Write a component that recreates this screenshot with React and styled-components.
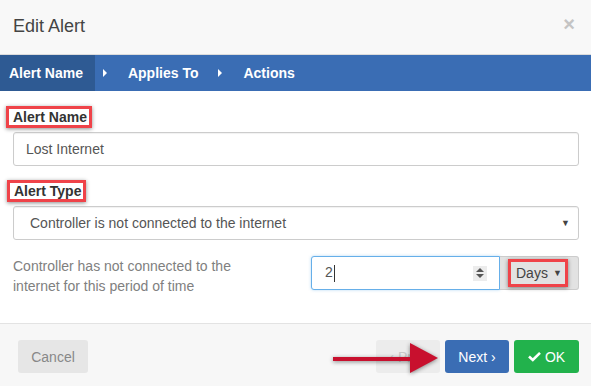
import React from 'react';
import styled, {createGlobalStyle} from 'styled-components';

const GlobalStyle = createGlobalStyle`
  html, body {
    margin: 0;
    padding: 0;
    background: #ffffff;
    font-family: "Liberation Sans", Arial, sans-serif;
  }
  * {
    box-sizing: border-box;
  }
`

const ModalSC = styled('div')`
  width: 591px;
  height: 386px;
  overflow: hidden;
  background: #ffffff;
  display: flex;
  flex-direction: column;
`

const HeaderSC = styled('div')`
  height: 55px;
  flex-shrink: 0;
  background: #f8f8f8;
  border-bottom: 1px solid #dcdcdc;
  display: flex;
  align-items: center;
  justify-content: space-between;
  padding: 0 16px 2px 13px;
`

const TitleSC = styled('h4')`
  margin: 0;
  font-size: 18px;
  font-weight: normal;
  color: #444444;
`

const CloseSC = styled('span')`
  font-size: 20px;
  font-weight: bold;
  color: #c4c4c4;
  line-height: 1;
  margin-bottom: 4px;
`

const StepBarSC = styled('div')`
  height: 36px;
  flex-shrink: 0;
  background: #3a6db4;
  display: flex;
  align-items: stretch;
`

const StepSC = styled('div')`
  display: flex;
  align-items: center;
  padding: 0 12px 0 9px;
  color: #ffffff;
  font-size: 14px;
  font-weight: bold;
  background: ${p => p.active ? '#2e5a93' : 'transparent'};
`

const StepArrowSC = styled('span')`
  align-self: center;
  width: 0;
  height: 0;
  border-top: 4px solid transparent;
  border-bottom: 4px solid transparent;
  border-left: 4px solid #ffffff;
  margin: 0 12px 0 8px;
`

const BodySC = styled('div')`
  flex: 1;
  padding: 15px 12px 0 13px;
`

const GroupSC = styled('div')`
  margin-bottom: ${p => p.gap || 15}px;
`

const LabelSC = styled('label')`
  display: block;
  margin-bottom: 4px;
  height: 22px;
`

const HighlightSC = styled('span')`
  display: inline-block;
  border: 3px solid #ef4349;
  box-shadow: 0 1px 4px rgba(0, 0, 0, 0.45);
  padding: 0 2px 0 4px;
  line-height: 16px;
  font-size: 14px;
  font-weight: bold;
  color: #333333;
  margin-left: ${p => p.shift || 0}px;
`

const FieldSC = styled('div')`
  height: 34px;
  border: 1px solid ${p => p.focus ? '#66afe9' : '#cccccc'};
  border-radius: ${p => p.square ? '3px 0 0 3px' : '3px'};
  background: #ffffff;
  display: flex;
  align-items: center;
  padding: 0 ${p => p.padRight || 12}px 0 ${p => p.padLeft || 12}px;
  font-size: 14px;
  color: #555555;
  box-shadow: ${p => p.focus ? '0 0 3px rgba(102, 175, 233, 0.5)' : 'inset 0 1px 1px rgba(0,0,0,0.06)'};
`

const GrowSC = styled('span')`
  flex: 1;
`

const CaretSC = styled('span')`
  display: inline-block;
  width: 1px;
  height: 17px;
  background: #333333;
  margin-left: 1px;
  vertical-align: middle;
`

const SelectArrowSC = styled('span')`
  font-size: 9px;
  color: #444444;
`

const SpinSC = styled('span')`
  width: 14px;
  height: 15px;
  background: #ececec;
  display: flex;
  flex-direction: column;
  align-items: center;
  justify-content: center;
  gap: 2px;
`

const SpinTriSC = styled('span')`
  width: 0;
  height: 0;
  border-left: 4px solid transparent;
  border-right: 4px solid transparent;
  ${p => p.up ? 'border-bottom: 4px solid #555555;' : 'border-top: 4px solid #555555;'}
`

const RowSC = styled('div')`
  display: grid;
  grid-template-columns: 283px 1fr;
  column-gap: 15px;
`

const HelpSC = styled('div')`
  max-width: 240px;
  font-size: 14px;
  line-height: 20px;
  color: #808080;
`

const InputGroupSC = styled('div')`
  display: flex;
`

const AddonSC = styled('div')`
  width: 79px;
  height: 34px;
  background: #e2e2e2;
  border: 1px solid #cccccc;
  border-left: none;
  border-radius: 0 3px 3px 0;
  display: flex;
  align-items: center;
  padding-left: 8px;
`

const DaysSC = styled('span')`
  display: inline-flex;
  align-items: center;
  gap: 5px;
  height: 28px;
  border: 3px solid #ef4349;
  box-shadow: 0 1px 4px rgba(0, 0, 0, 0.45);
  padding: 0 3px 0 5px;
  font-size: 14px;
  color: #444444;
`

const FooterSC = styled('div')`
  position: relative;
  height: 63px;
  flex-shrink: 0;
  background: #f7f7f7;
  border-top: 1px solid #e3e3e3;
  display: flex;
  align-items: flex-start;
  justify-content: space-between;
  padding: 16px 12px 0 18px;
`

const ButtonsSC = styled('div')`
  display: flex;
  gap: 5px;
`

const ButtonSC = styled('button')`
  height: 33px;
  min-width: ${p => p.w || 64}px;
  border: none;
  border-radius: 3px;
  font-family: inherit;
  font-size: 14px;
  padding: 0 10px;
  display: flex;
  align-items: center;
  justify-content: center;
  gap: 4px;
  background: ${p => p.bg};
  color: ${p => p.color};
`

const PointerSC = styled('svg')`
  position: absolute;
  left: 330px;
  top: 18px;
  filter: drop-shadow(0 1px 2px rgba(0, 0, 0, 0.45));
`

const App = () => {
    const steps = ['Alert Name', 'Applies To', 'Actions']

    return (
        <>
            <GlobalStyle/>
            <ModalSC>
                <HeaderSC>
                    <TitleSC>Edit Alert</TitleSC>
                    <CloseSC>×</CloseSC>
                </HeaderSC>

                <StepBarSC>
                    {
                        steps.map((step, index) => (
                            <React.Fragment key={step}>
                                {index > 0 && <StepArrowSC/>}
                                <StepSC active={index === 0}>{step}</StepSC>
                            </React.Fragment>
                        ))
                    }
                </StepBarSC>

                <BodySC>
                    <GroupSC gap={14}>
                        <LabelSC><HighlightSC shift={-7}>Alert Name</HighlightSC></LabelSC>
                        <FieldSC padLeft={12}>Lost Internet</FieldSC>
                    </GroupSC>

                    <GroupSC gap={16}>
                        <LabelSC><HighlightSC shift={-6}>Alert Type</HighlightSC></LabelSC>
                        <FieldSC padLeft={16} padRight={8}>
                            <GrowSC>Controller is not connected to the internet</GrowSC>
                            <SelectArrowSC>▼</SelectArrowSC>
                        </FieldSC>
                    </GroupSC>

                    <RowSC>
                        <HelpSC>Controller has not connected to the internet for this period of time</HelpSC>
                        <InputGroupSC>
                            <FieldSC focus square padLeft={13} padRight={12} style={{flex: 1}}>
                                <GrowSC>2<CaretSC/></GrowSC>
                                <SpinSC>
                                    <SpinTriSC up/>
                                    <SpinTriSC/>
                                </SpinSC>
                            </FieldSC>
                            <AddonSC>
                                <DaysSC>Days <SelectArrowSC>▼</SelectArrowSC></DaysSC>
                            </AddonSC>
                        </InputGroupSC>
                    </RowSC>
                </BodySC>

                <FooterSC>
                    <ButtonSC w={70} bg="#e6e6e6" color="#888888">Cancel</ButtonSC>
                    <ButtonsSC>
                        <ButtonSC bg="#ececec" color="#c8c8c8">‹ Prev</ButtonSC>
                        <ButtonSC bg="#3a6db4" color="#ffffff">Next ›</ButtonSC>
                        <ButtonSC w={65} bg="#22b24c" color="#ffffff">
                            <svg width="13" height="11" viewBox="0 0 13 11">
                                <path d="M1 5.5 L4.8 9 L12 1.8" fill="none" stroke="#ffffff" strokeWidth="2.6"/>
                            </svg>
                            OK
                        </ButtonSC>
                    </ButtonsSC>
                    <PointerSC width="112" height="34" viewBox="0 0 112 34">
                        <rect x="3" y="15" width="80" height="4" fill="#c8102e"/>
                        <polygon points="80,1 108,16 80,31" fill="#c8102e"/>
                    </PointerSC>
                </FooterSC>
            </ModalSC>
        </>
    );
}

export default App;
